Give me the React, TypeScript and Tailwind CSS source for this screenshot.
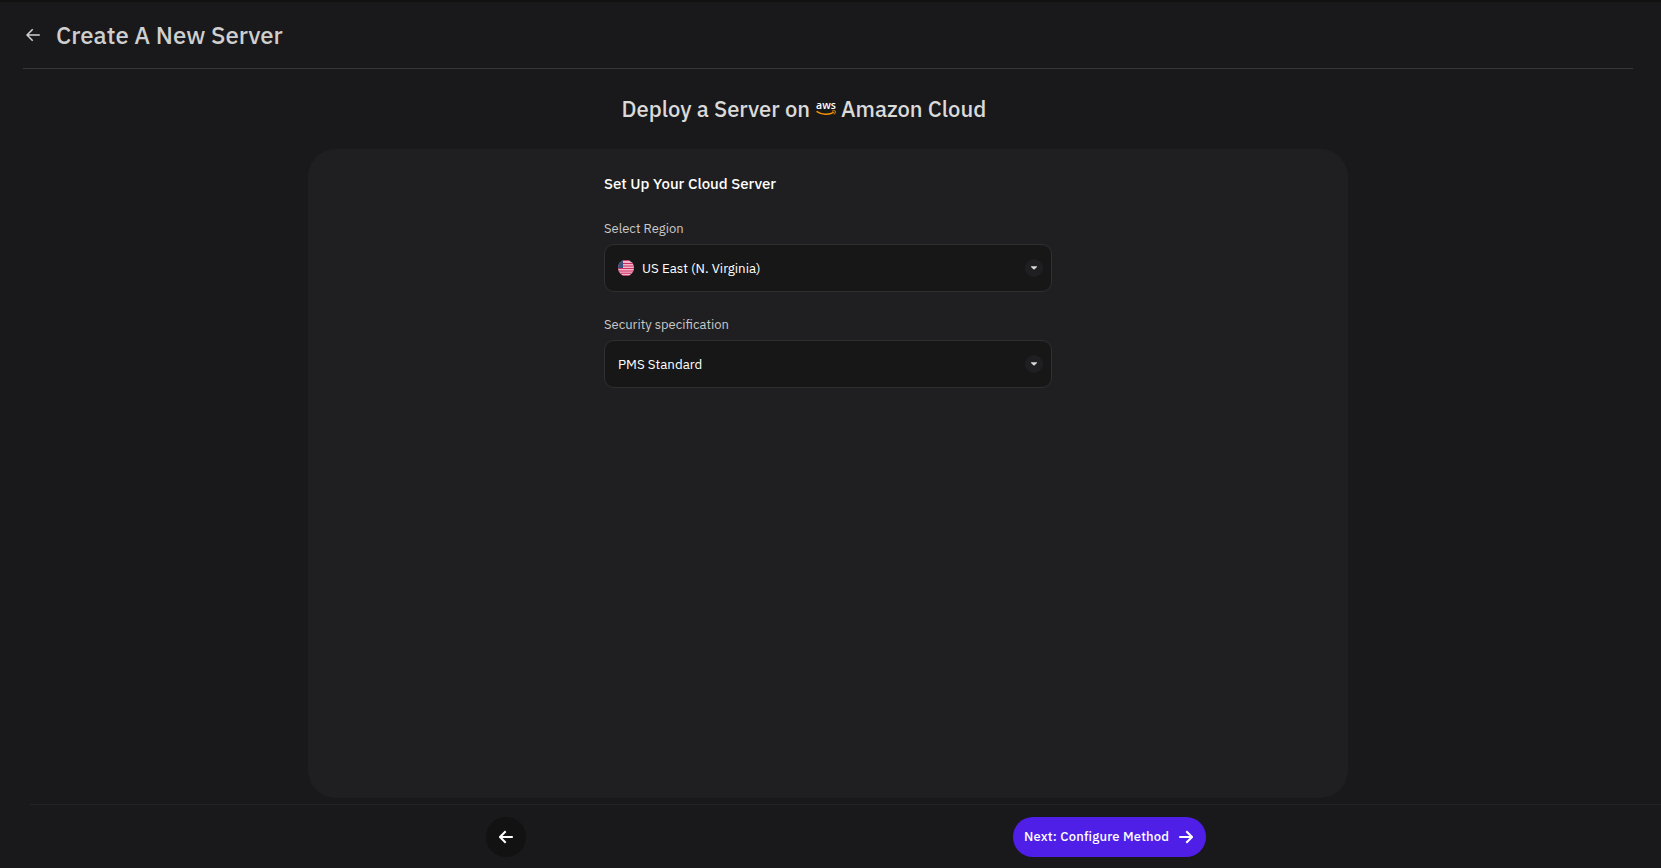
import { useId } from 'react'

const regions = { label: 'Select Region', value: 'US East (N. Virginia)' }
const security = { label: 'Security specification', value: 'PMS Standard' }

function ArrowLeft({ className }: { className?: string }) {
  return (
    <svg viewBox="0 0 14 14" className={className} fill="none" stroke="currentColor">
      <path d="M13.8 7H1M6.7 1.2L1 7l5.7 5.8" />
    </svg>
  )
}

function ArrowRight({ className }: { className?: string }) {
  return (
    <svg viewBox="0 0 14 14" className={className} fill="none" stroke="currentColor">
      <path d="M0.2 7H13M7.3 1.2L13 7l-5.7 5.8" />
    </svg>
  )
}

function UsFlag() {
  const clip = useId()
  return (
    <svg viewBox="0 0 16 16" className="w-4 h-4 mr-2 shrink-0">
      <clipPath id={clip}>
        <circle cx="8" cy="8" r="8" />
      </clipPath>
      <g clipPath={`url(#${clip})`}>
        <rect width="16" height="16" fill="#f5b5cb" />
        <path d="M0 .5h16M0 3.5h16M0 6h16M0 8.5h16M0 11h16M0 13.3h16M0 15.5h16" stroke="#c9305f" strokeWidth="1.1" />
        <rect width="5" height="8" fill="#36527c" />
      </g>
    </svg>
  )
}

function AwsLogo() {
  return (
    <span className="flex flex-col items-center w-5 h-[15px] shrink-0">
      <span className="font-['Open_Sans',sans-serif] text-[10.5px] leading-[9px] font-semibold text-white">aws</span>
      <svg viewBox="0 0 20 6" className="w-5 h-1.5" fill="none" stroke="#f79400">
        <path d="M.5 1.300C6 5.100 13 5.100 17.800 2.400" strokeWidth="1.4" />
        <path d="M16 1.100c2.600-.7 3.700-.4 3.400.6-.1 1-.5 2-1.100 2.700" strokeWidth="1" />
      </svg>
    </span>
  )
}

function SelectField({ label, value, flag }: { label: string; value: string; flag?: boolean }) {
  return (
    <div className="flex flex-col">
      <label className="h-5 leading-[22px] text-[13px] text-[#c9c9ca]">{label}</label>
      <button className="flex items-center h-12 mt-[6px] pl-[13px] pr-2 rounded-[10px] border border-[#303032] bg-[#171717] text-white text-[13.333px]">
        {flag && <UsFlag />}
        <span className="pt-0.5 whitespace-nowrap">{value}</span>
        <span className="flex items-center justify-center w-[18px] h-[18px] ml-auto rounded-full bg-[#1f1f21]">
          <svg viewBox="0 0 6 4" className="w-1.5 h-1" fill="#d8d8d8">
            <path d="M0 .2h6v.8L3 3.800L0 1z" />
          </svg>
        </span>
      </button>
    </div>
  )
}

export default function App() {
  return (
    <div className="flex flex-col w-full h-screen overflow-hidden bg-[#19191b] border-t-2 border-[#121213] font-['IBM_Plex_Sans',Roboto,sans-serif]">
      {/* Page header */}
      <header className="flex items-center h-[67px] shrink-0 ml-[23px] mr-[28px] border-b border-[#353536] text-[#cfcfcf]">
        <ArrowLeft className="w-[14px] h-[14px] ml-[3px] stroke-[1.6]" />
        <h1 className="ml-4 text-2xl font-medium whitespace-nowrap">Create A New Server</h1>
      </header>

      <h2 className="flex items-center h-8 mt-[23px] ml-[621.5px] shrink-0 text-[22px] font-medium text-[#dadada] whitespace-nowrap">
        <span className="w-[194.5px]">Deploy a Server on</span>
        <AwsLogo />
        <span className="ml-[5px]">Amazon Cloud</span>
      </h2>

      {/* Setup card */}
      <main className="flex justify-center w-[1040px] h-[649px] mt-[25px] ml-[308px] shrink-0 rounded-[28px] bg-[#1f1f21]">
        <div className="flex flex-col w-[448px] pt-[25px]">
          <h3 className="h-5 leading-5 text-[15px] font-medium text-white">Set Up Your Cloud Server</h3>
          <div className="flex flex-col gap-[22px] mt-6">
            <SelectField {...regions} flag />
            <SelectField {...security} />
          </div>
        </div>
      </main>

      {/* Step navigation */}
      <footer className="flex items-start justify-between mt-[6px] ml-[30px] pt-3 pl-[456px] pr-[455px] border-t border-[#232325]">
        <button className="flex items-center justify-center w-10 h-10 pb-px rounded-full bg-[#121212] text-white">
          <ArrowLeft className="w-[14px] h-[14px] stroke-2" />
        </button>
        <button className="flex items-center w-[193px] h-10 pb-px pl-[11px] pr-[13px] rounded-full bg-[#4f1fe8] text-white text-[13px] font-medium tracking-[0.2px]">
          <span className="whitespace-nowrap">Next: Configure Method</span>
          <ArrowRight className="w-[14px] h-[14px] ml-auto stroke-2" />
        </button>
      </footer>
    </div>
  )
}
